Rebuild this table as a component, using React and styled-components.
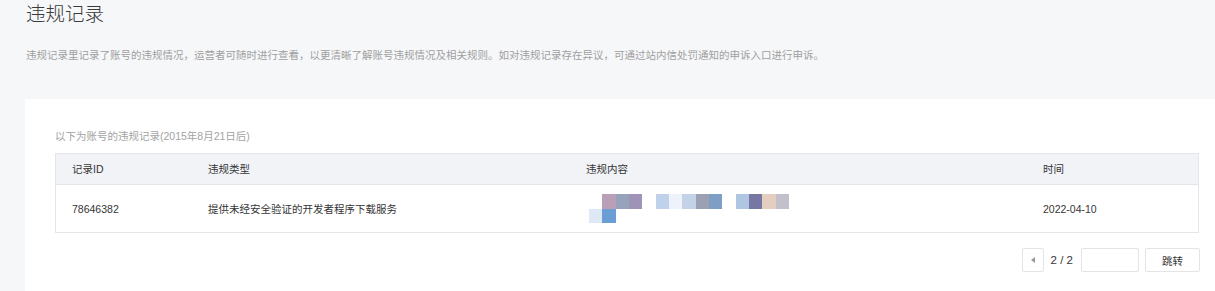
import React from "react";
import styled, { createGlobalStyle } from "styled-components";

const GlobalStyle = createGlobalStyle`
  body {
    margin: 0;
    background: #f6f7f9;
    font-family: "Liberation Sans", "Noto Sans CJK SC", sans-serif;
    color: #353535;
  }
`;

const Page = styled.div`
  min-height: 291px;
  display: flex;
  flex-direction: column;
`;

const Header = styled.div`
  padding-left: 26px;
`;

const Title = styled.h1`
  margin: 0;
  font-size: 19.5px;
  line-height: 28px;
  font-weight: 300;
  color: #3a3a3a;
`;

const Desc = styled.p`
  margin: 19px 0 0;
  font-size: 10.5px;
  line-height: 16px;
  color: #9f9f9f;
`;

const Panel = styled.div`
  flex: 1;
  margin: 36px 0 0 25px;
  padding: 29px 16px 20px 30px;
  background: #fff;
`;

const Caption = styled.div`
  font-size: 10.5px;
  line-height: 16px;
  color: #a3a3a3;
  margin-bottom: 9px;
`;

const Table = styled.div`
  border: 1px solid #e4e5ea;
`;

const Row = styled.div`
  display: grid;
  grid-template-columns: 136px 378px 457px 1fr;
  align-items: center;
  height: ${(p) => (p.$head ? "30px" : "47px")};
  background: ${(p) => (p.$head ? "#f2f3f7" : "#fff")};
  border-bottom: ${(p) => (p.$head ? "1px solid #e4e5ea" : "none")};
`;

const Cell = styled.div`
  padding-left: 16px;
  font-size: 10.5px;
  line-height: 16px;
  color: #353535;
`;

const Mosaic = styled.div`
  display: grid;
  grid-template-columns: repeat(15, 13.33px);
  grid-auto-rows: 14.2px;
  margin-left: 3px;
`;

const Pixel = styled.span`
  background: ${(p) => p.$c};
`;

const Pager = styled.div`
  display: flex;
  justify-content: flex-end;
  align-items: center;
  margin-top: 15px;
  margin-right: -1px;
`;

const PrevBtn = styled.button`
  width: 22px;
  height: 24px;
  padding: 0;
  border: 1px solid #e3e4e8;
  border-radius: 2px;
  background: #fff;
  display: flex;
  align-items: center;
  justify-content: center;
`;

const Arrow = styled.span`
  width: 0;
  height: 0;
  border-top: 3.5px solid transparent;
  border-bottom: 3.5px solid transparent;
  border-right: 4px solid #9a9a9a;
`;

const PageNum = styled.span`
  margin: 0 8px 0 7px;
  font-size: 11.5px;
  color: #353535;
`;

const JumpInput = styled.input`
  box-sizing: border-box;
  width: 58px;
  height: 24px;
  border: 1px solid #e3e4e8;
  border-radius: 2px;
  outline: none;
`;

const JumpBtn = styled.button`
  box-sizing: border-box;
  width: 55px;
  height: 24px;
  margin-left: 6px;
  border: 1px solid #e3e4e8;
  border-radius: 2px;
  background: #fff;
  font-family: inherit;
  font-size: 10.5px;
  color: #353535;
`;

const pixels = [
  null, "#b9a0b6", "#96a3ba", "#9f93b8", null,
  "#c0d2eb", "#eef3fb", "#c4d2e7", "#9ba1b3", "#7f9ec5", null,
  "#afc6e2", "#7777a3", "#e3cec0", "#c1c0cb",
  "#dfe8f5", "#6a9ed4",
];

const App = () => {
  return (
    <Page>
      <GlobalStyle />
      <Header>
        <Title>违规记录</Title>
        <Desc>
          违规记录里记录了账号的违规情况，运营者可随时进行查看，以更清晰了解账号违规情况及相关规则。如对违规记录存在异议，可通过站内信处罚通知的申诉入口进行申诉。
        </Desc>
      </Header>
      <Panel>
        <Caption>以下为账号的违规记录(2015年8月21日后)</Caption>
        <Table>
          <Row $head>
            <Cell>记录ID</Cell>
            <Cell>违规类型</Cell>
            <Cell>违规内容</Cell>
            <Cell>时间</Cell>
          </Row>
          <Row>
            <Cell>78646382</Cell>
            <Cell>提供未经安全验证的开发者程序下载服务</Cell>
            <Cell>
              <Mosaic>
                {pixels.map((c, i) => (
                  <Pixel key={i} $c={c || "transparent"} />
                ))}
              </Mosaic>
            </Cell>
            <Cell>2022-04-10</Cell>
          </Row>
        </Table>
        <Pager>
          <PrevBtn>
            <Arrow />
          </PrevBtn>
          <PageNum>2 / 2</PageNum>
          <JumpInput />
          <JumpBtn>跳转</JumpBtn>
        </Pager>
      </Panel>
    </Page>
  );
};

export default App;
